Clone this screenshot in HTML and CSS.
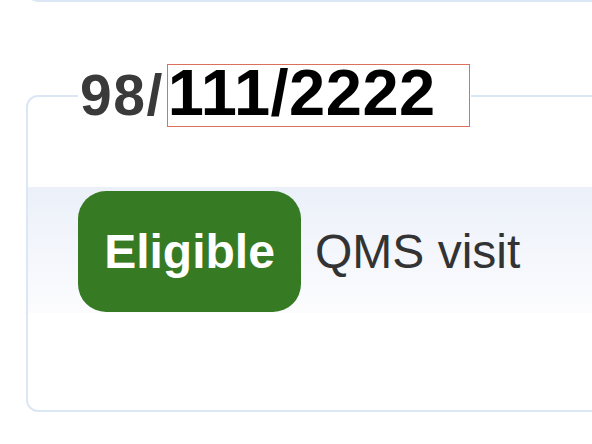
FILE: index.html
```html
<!DOCTYPE html>
<html>
<head>
<meta charset="utf-8">
<link rel="stylesheet" href="styles.css">
</head>
<body>
<div class="prev-card"></div>
<fieldset class="card">
  <legend class="title"><span class="prefix">98/</span><span class="hl">111/2222</span></legend>
  <div class="band">
    <span class="badge">Eligible</span>
    <span class="label">QMS visit</span>
  </div>
</fieldset>
</body>
</html>
```

FILE: styles.css
```css
html, body {
  margin: 0;
  padding: 0;
  background: #ffffff;
  overflow: hidden;
}

body {
  font-family: "Liberation Sans", Arial, sans-serif;
  width: 592px;
  height: 444px;
}

.prev-card {
  height: 40px;
  margin: -42px -60px 0 26px;
  border: 2px solid #dce7f5;
  border-radius: 12px;
}

.card {
  margin: 62px -60px 0 26px;
  padding: 0 0 97px 0;
  border: 2px solid #dce7f5;
  border-radius: 12px;
  min-width: 0;
}

.title {
  margin-left: 50px;
  padding: 0 1px 0 2px;
  font-size: 57px;
  line-height: 61px;
  font-weight: bold;
  color: #3a3a3a;
}

.prefix {
  letter-spacing: 1.5px;
  margin-right: 3px;
}

.hl {
  display: inline-block;
  font-size: 65px;
  line-height: 55px;
  letter-spacing: 0.5px;
  color: #000000;
  border: 1px solid #dd6f5c;
  padding: 0 33px 6px 0;
}

.band {
  margin-top: 60px;
  height: 121px;
  padding: 4px 0 1px 50px;
  display: flex;
  align-items: center;
  background: linear-gradient(#ebf0f9, #fcfcfe);
}

.badge {
  width: 223px;
  height: 121px;
  box-sizing: border-box;
  border-radius: 28px;
  background: #367b24;
  color: #ffffff;
  font-size: 48px;
  font-weight: bold;
  display: flex;
  align-items: center;
  justify-content: center;
}

.label {
  margin-left: 14px;
  font-size: 48px;
  color: #333333;
}
```
